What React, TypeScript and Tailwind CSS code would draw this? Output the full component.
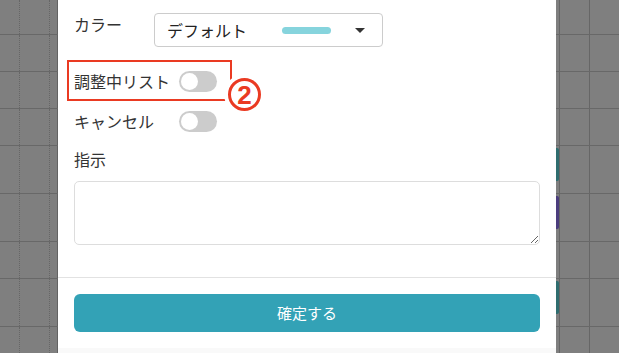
import React from 'react';

const rowHeights = ['h-[35px]', 'h-[37px]', 'h-[37px]', 'h-[37px]', 'h-[48px]', 'h-[48px]', 'h-[37px]', 'h-[48px]', 'flex-1'];

// events peeking out from behind the modal on the right side
const peekEvents: Record<number, string> = {
  4: 'bg-[#2f6d6f]',
  5: 'bg-[#4b3d7d]',
  7: 'bg-[#2f6d6f]',
};

function LeftBackdrop() {
  return (
    <div className="w-[58px] h-full flex flex-col shrink-0">
      {rowHeights.map((h, i) => (
        <div key={i} className={`${h} flex border-b border-[#686868] last:border-b-0`}>
          <div className="w-[20px] border-r border-dotted border-[#666666]" />
          <div className="w-[30px] border-r border-dotted border-[#666666]" />
          <div className="flex-1 border-r border-[#636363]" />
        </div>
      ))}
    </div>
  );
}

function RightBackdrop() {
  return (
    <div className="flex-1 h-full flex flex-col">
      {rowHeights.map((h, i) => (
        <div key={i} className={`${h} flex border-b border-[#686868] last:border-b-0`}>
          <div className="w-[3px] flex flex-col">
            {peekEvents[i] && <div className={`mt-[2px] h-[33px] rounded-r-[2px] ${peekEvents[i]}`} />}
          </div>
          <div className="w-[31px] border-l border-[#666666] border-r border-r-[#666666] border-r-dotted" />
          <div className="flex-1" />
        </div>
      ))}
    </div>
  );
}

function Toggle() {
  return (
    <div className="w-[38px] h-[21px] rounded-full bg-[#cccccc] flex items-center">
      <div className="w-[17px] h-[17px] rounded-full bg-white ml-[2px]" />
    </div>
  );
}

export default function App() {
  return (
    <div
      className="w-[619px] h-[353px] flex bg-[#7f7f7f] overflow-hidden text-[#333333]"
      style={{ fontFamily: '"Noto Sans CJK JP", "Noto Sans", sans-serif' }}
    >
      <LeftBackdrop />

      <div className="w-[498px] h-full bg-white flex flex-col relative shrink-0">
        <div className="px-[16px] pt-[13px] pb-[32px] flex flex-col">
          <div className="flex items-center">
            <div className="w-[80px] text-[16px] leading-[20px] -mt-[12px]">カラー</div>
            <div className="w-[229px] h-[34px] border border-[#cccccc] rounded-[4px] flex items-center pl-[12px] pr-[17px]">
              <span className="text-[16px] leading-[20px] text-[#222222]">デフォルト</span>
              <div className="flex-1" />
              <div className="w-[49px] h-[7px] rounded-full bg-[#86d4dd]" />
              <div className="ml-[24px] w-0 h-0 border-l-[5px] border-r-[5px] border-t-[5px] border-l-transparent border-r-transparent border-t-[#333333]" />
            </div>
          </div>

          <div className="mt-[24px] h-[21px] flex items-center">
            <div className="w-[105px] text-[16px] leading-[20px] -mt-[2px]">調整中リスト</div>
            <Toggle />
          </div>

          <div className="mt-[19px] h-[21px] flex items-center">
            <div className="w-[105px] text-[16px] leading-[20px] -mt-[2px]">キャンセル</div>
            <Toggle />
          </div>

          <div className="mt-[17px] text-[16px] leading-[20px]">指示</div>

          <textarea className="mt-[12px] h-[64px] w-full border border-[#dddddd] rounded-[5px] outline-none resize-y" />
        </div>

        <div className="border-t border-[#e2e2e2] px-[16px] pt-[16px] pb-[16px]">
          <button className="w-full h-[38px] rounded-[6px] bg-[#33a2b6] text-white text-[15px] flex items-center justify-center">
            確定する
          </button>
        </div>

        <div className="flex-1 bg-[#f9f9f9]" />

        {/* annotation overlay */}
        <div className="absolute left-[9px] top-[60px] w-[165px] h-[41px] border-2 border-[#ea3a22] pointer-events-none" />
        <div className="absolute left-[170px] top-[78px] w-[33px] h-[33px] rounded-full border-[3px] border-[#ea3a22] bg-white ring-[4px] ring-white flex items-center justify-center">
          <span
            className="text-[#ea3a22] text-[26px] font-bold leading-none"
            style={{ fontFamily: '"Liberation Sans", Arial, sans-serif' }}
          >
            2
          </span>
        </div>
      </div>

      <RightBackdrop />
    </div>
  );
}
